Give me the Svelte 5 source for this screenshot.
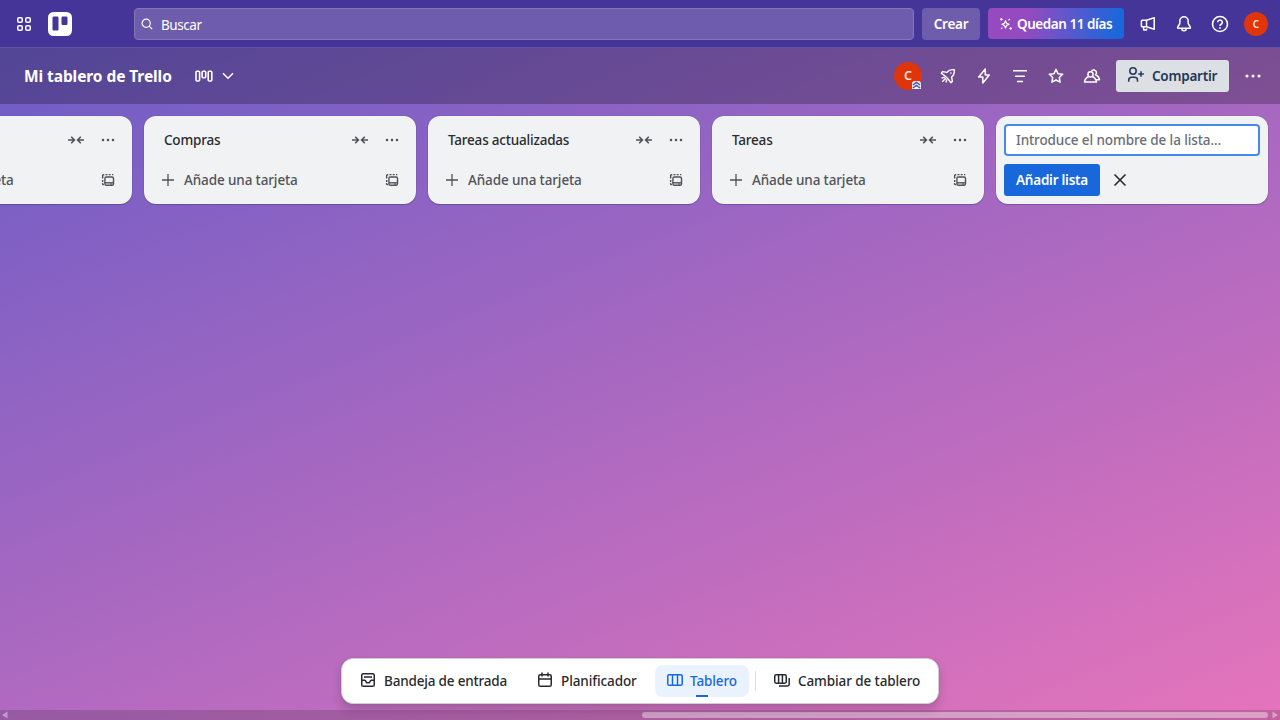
<script>
  const lists = ['', 'Compras', 'Tareas actualizadas', 'Tareas'];
</script>

{#snippet more()}
  <svg width="16" height="16" viewBox="0 0 16 16" fill="currentColor"><circle cx="3" cy="8" r="1.250"/><circle cx="8" cy="8" r="1.250"/><circle cx="13" cy="8" r="1.250"/></svg>
{/snippet}

<div class="app">
  <header class="top">
    <button class="ic apps" aria-label="Aplicaciones"><svg width="16" height="16" viewBox="0 0 16 16" fill="none" stroke="currentColor" stroke-width="1.5"><rect x="1.75" y="1.75" width="4.5" height="4.5" rx="1.3"/><rect x="9.75" y="1.75" width="4.5" height="4.5" rx="1.3"/><rect x="1.75" y="9.75" width="4.5" height="4.5" rx="1.3"/><rect x="9.75" y="9.75" width="4.5" height="4.5" rx="1.3"/></svg></button>
    <svg class="logo" width="24" height="24" viewBox="0 0 24 24"><rect width="24" height="24" rx="5.5" fill="#fff"/><rect x="4.5" y="4.5" width="6" height="14" rx="1.2" fill="#453599"/><rect x="13.5" y="4.5" width="6" height="8.5" rx="1.2" fill="#453599"/></svg>
    <div class="search">
      <svg width="12" height="12" viewBox="0 0 12 12" fill="none" stroke="currentColor" stroke-width="1.2"><circle cx="5.2" cy="5.2" r="4.1"/><path d="m8.2 8.2 3 3"/></svg>
      <span class="buscar">Buscar</span>
    </div>
    <button class="crear"><span>Crear</span></button>
    <button class="trial">
      <svg width="14" height="14" viewBox="0 0 14 14" fill="none" stroke="currentColor" stroke-width="1.2" stroke-linejoin="round"><path d="M6.500 3.700 7.600 6.200l2.500 1.100-2.500 1.100-1.100 2.500-1.100-2.500-2.500-1.100 2.500-1.100Z"/><path d="M2.300 1v2.600M1 2.300h2.600M11.700 10.200v2.600M10.400 11.500H13M9.500 3.400l1.400-1.400M2.200 11.800l1.100-1.100"/></svg>
      <span>Quedan 11 días</span>
    </button>
    <div class="topicons">
      <svg width="16" height="16" viewBox="0 0 16 16" fill="none" stroke="currentColor" stroke-width="1.5" stroke-linejoin="round"><path d="m6.500 4.300 7.700-2.500v11.400L6.500 10.700H2.200a.8.800 0 0 1-.8-.8V5.100a.8.800 0 0 1 .8-.8Zm0 0v6.400M3.600 10.700v2.600a.8.800 0 0 0 .8.800h1.400a.8.800 0 0 0 .8-.8v-.9"/></svg>
      <svg width="16" height="16" viewBox="0 0 16 16" fill="none" stroke="currentColor" stroke-width="1.5" stroke-linejoin="round"><path d="M8 .8a4.200 4.200 0 0 0-4.200 4.200v2.600L1.700 11v1.300h12.600V11l-2.100-3.400V5A4.200 4.200 0 0 0 8 .8ZM5.700 12.500a2.300 2.300 0 0 0 4.600 0"/></svg>
      <svg width="18" height="18" viewBox="0 0 18 18" fill="none" stroke="currentColor" stroke-width="1.6"><circle cx="9" cy="9" r="7.500"/><path d="M6.700 7.300a2.300 2.300 0 1 1 3.500 2C9.400 9.800 9 10.100 9 11"/><circle cx="9" cy="12.900" r=".9" fill="currentColor" stroke="none"/></svg>
      <span class="avatar small">C</span>
    </div>
  </header>

  <div class="boardbar">
    <h1>Mi tablero de Trello</h1>
    <svg class="view" width="18" height="14" viewBox="0 0 18 14" fill="none" stroke="currentColor" stroke-width="1.600"><rect x="1" y="1.200" width="3.600" height="9.800" rx="1"/><rect x="7.100" y="1.200" width="3.600" height="6.500" rx="1"/><rect x="13.200" y="1.200" width="3.600" height="9.800" rx="1"/></svg>
    <svg class="chev" width="12" height="8" viewBox="0 0 12 8" fill="none" stroke="currentColor" stroke-width="1.500"><path d="m1 1.300 5 5 5-5"/></svg>
    <div class="tools">
      <span class="avatar mid">C<i><svg width="9" height="8" viewBox="0 0 9 8" fill="none" stroke="#4551a0" stroke-width="1.300"><path d="m.8 4 3.700-2.600L8.200 4M.8 7l3.700-2.600L8.200 7"/></svg></i></span>
      <svg width="16" height="16" viewBox="0 0 16 16" fill="none" stroke="currentColor" stroke-width="1.400" stroke-linejoin="round"><path d="M14.300 1.700c-3.200-.3-5.400.2-7.300 2.700L2.600 3.600 1.300 5.200l3.700 2.700 3.100 3.100 2.700 3.700 1.600-1.300-.8-4.400c2.500-1.900 3-4.100 2.700-7.300ZM4.800 9.300l-3.300.8M5.800 10.300l-3.500 3.500M6.800 11.300l-.8 3.200"/><circle cx="10.900" cy="5.100" r=".8" fill="currentColor" stroke="none"/></svg>
      <svg width="16" height="16" viewBox="0 0 16 16" fill="none" stroke="currentColor" stroke-width="1.500" stroke-linejoin="round"><path d="M9.300 1 2.700 9h4.100v6l6.500-8H9.300Z"/></svg>
      <svg width="16" height="16" viewBox="0 0 16 16" stroke="currentColor" stroke-width="1.500"><path d="M1 2.750h14M3 8.250h10M5 13.500h6"/></svg>
      <svg width="16" height="16" viewBox="0 0 16 16" fill="none" stroke="currentColor" stroke-width="1.500" stroke-linejoin="round"><path d="m8 1.400 2 4.300 4.700.6-3.400 3.200.8 4.700L8 12l-4.100 2.200.8-4.700-3.400-3.200 4.700-.6Z"/></svg>
      <svg class="people" width="18" height="16" viewBox="0 0 18 16" fill="none" stroke="currentColor" stroke-width="1.500" stroke-linejoin="round"><circle cx="7.500" cy="6.300" r="2.600"/><path d="M5.800 8.500C3.300 9.500 1.800 11.500 1.500 14h12c-.3-2.500-1.800-4.500-4.300-5.500M8.500 2.900a2.800 2.800 0 1 1 4 3.900c2.200.9 3.700 2.600 4 4.900h-3.200"/></svg>
      <button class="share"><svg width="18" height="18" viewBox="0 0 18 18" fill="none" stroke="currentColor" stroke-width="1.500"><circle cx="6" cy="5" r="3.200"/><path d="M1.700 15.700v-1.500a3 3 0 0 1 3-3h2.800a3 3 0 0 1 3 3v1.500M14 5.200v5.600M11.200 8h5.600"/></svg><span>Compartir</span></button>
      <svg class="bm" width="18" height="16" viewBox="0 0 18 16" fill="currentColor"><circle cx="3" cy="8" r="1.550"/><circle cx="9" cy="8" r="1.550"/><circle cx="15" cy="8" r="1.550"/></svg>
    </div>
  </div>

  <main>
    {#each lists as name}
      <section class="list">
        <div class="lh">
          <h2>{name}</h2>
          <div class="acts">
            <svg width="18" height="16" viewBox="0 0 18 16" fill="none" stroke="currentColor" stroke-width="1.600"><path d="M1 8h6M4.200 4.800 7.400 8l-3.200 3.200M17 8h-6M13.800 4.800 10.600 8l3.200 3.200"/></svg>
            {@render more()}
          </div>
        </div>
        <div class="add">
          <svg width="16" height="16" viewBox="0 0 16 16" stroke="currentColor" stroke-width="1.300"><path d="M8 2v12M2 8h12"/></svg>
          <span>Añade una tarjeta</span>
          <svg class="tpl" width="16" height="16" viewBox="0 0 16 16" fill="none" stroke="currentColor" stroke-width="1.400"><path d="M4 12.600h-.6a.8.800 0 0 1-.8-.8V11M2.650 10V8M2.650 6.500V3.500a.8.800 0 0 1 .8-.8h.8M5.500 2.650h2M8.700 2.650h2M12 2.650h1.300"/><rect x="4.900" y="5" width="8.600" height="8.200" rx="1.500"/><path d="M4.900 10.800h8.600"/><path d="M10 12h2" stroke-width="1"/></svg>
        </div>
      </section>
    {/each}
    <section class="list form">
      <input aria-label="Nombre de la lista" placeholder="Introduce el nombre de la lista..." />
      <div class="row">
        <button class="primary"><span>Añadir lista</span></button>
        <svg width="16" height="16" viewBox="0 0 16 16" stroke="#292a2e" stroke-width="1.600"><path d="m2.500 2.500 11 11M13.500 2.500l-11 11"/></svg>
      </div>
    </section>
  </main>

  <nav>
    <div class="tab t1"><svg width="16" height="16" viewBox="0 0 16 16" fill="none" stroke="currentColor" stroke-width="1.500" stroke-linejoin="round"><rect x="1.750" y="1.750" width="12.500" height="12.500" rx="1.600"/><path d="M4 5h8M2 8.300h2.600c.3 0 .6.200.8.500l1.400 1.900h2.400l1.400-1.900c.2-.3.500-.5.800-.5H14"/></svg><span>Bandeja de entrada</span></div>
    <div class="tab t2"><svg width="16" height="16" viewBox="0 0 16 16" fill="none" stroke="currentColor" stroke-width="1.500"><rect x="1.750" y="2.750" width="12.500" height="11.500" rx="1.600"/><path d="M2 7h12M5 .5v4M11 .5v4"/></svg><span>Planificador</span></div>
    <div class="tab t3 on"><svg width="16" height="16" viewBox="0 0 16 16" fill="none" stroke="currentColor" stroke-width="1.500"><rect x=".75" y="2.750" width="14.500" height="10.500" rx="1.600"/><path d="M5.500 3v10M10.500 3v10"/></svg><span>Tablero</span></div>
    <div class="sep"></div>
    <div class="tab t4"><svg width="18" height="16" viewBox="0 0 18 16" fill="none" stroke="currentColor" stroke-width="1.500"><rect x="1.750" y="2.750" width="11.500" height="8.500" rx="1.400"/><path d="M5.600 3v8M9.400 3v8M6 14h8.500a1.700 1.700 0 0 0 1.700-1.700V6"/></svg><span>Cambiar de tablero</span></div>
  </nav>

  <div class="scroll">
    <svg width="10" height="10" viewBox="0 0 10 10" fill="currentColor"><path d="M7.500 1.500v7L2 5Z"/></svg>
    <div class="thumb"></div>
    <svg width="12" height="10" viewBox="0 0 12 10" fill="currentColor"><path d="M4.500 1.500v7L10 5Z"/></svg>
  </div>
</div>

<style>
  * { box-sizing: border-box; }
  .app { position: relative; display: flex; flex-direction: column; width: 1280px; height: 720px; overflow: hidden; font: 550 13.5px/20px "Noto Sans", "Open Sans", sans-serif; color: #fff; background: linear-gradient(158deg, #6e5dc6 5%, #e774bb 101%); }
  svg { flex: none; display: block; }
  button { font: inherit; color: inherit; border: 0; background: none; padding: 0; display: flex; align-items: center; }
  span, h1, h2 { white-space: nowrap; }
  .top { height: 48px; flex: none; display: flex; align-items: center; background: #453599; border-bottom: 1px solid #6254a4; padding: 0 12px 0 16px; }
  .logo { margin-left: 16px; }
  .search { margin-left: 62px; width: 780px; height: 32px; border: 1px solid #8475b6; border-radius: 4px; background: #6e5dac; display: flex; align-items: center; padding-left: 6px; gap: 8px; font-weight: 400; }
  .buscar { letter-spacing: -.45px; padding-top: 2px; }
  .crear { margin-left: 8px; width: 58px; height: 32px; justify-content: center; border-radius: 4px; background: #6e5dac; font-weight: 600; letter-spacing: -.25px; }
  .trial { margin-left: 8px; width: 136px; height: 31px; border-radius: 4px; background: linear-gradient(100deg, #964ac0 28%, #1868db 95%); padding-left: 11px; gap: 4px; font-weight: 600; letter-spacing: -.45px; }
  .topicons { margin-left: auto; display: flex; align-items: center; gap: 20px; }
  .topicons svg:nth-child(2) { margin-right: -1px; }
  .topicons svg:nth-child(3) { margin-right: -5px; }
  .avatar { background: #de350b; border-radius: 50%; display: flex; align-items: center; justify-content: center; color: #ffe4dc; font-weight: 600; position: relative; }
  .small { width: 24px; height: 24px; font-size: 10px; }
  .mid { width: 28px; height: 28px; font-size: 12.5px; }
  .mid i { position: absolute; right: 1px; bottom: 1px; width: 9px; height: 8px; background: #eef1fa; border-radius: 3px 3px 0 0; }
  .boardbar { height: 56px; flex: none; display: flex; align-items: center; padding: 0 18px 0 24px; background: #0000003d; }
  h1 { margin: 0; font-size: 15.5px; line-height: 24px; font-weight: 750; width: 171px; letter-spacing: -.08px; }
  .chev { margin-left: 9px; }
  .view { margin-top: 2px; }
  .tools { margin-left: auto; display: flex; align-items: center; gap: 20px; }
  .tools .mid { margin-right: -2px; }
  .people { margin-left: -1px; }
  .share { height: 32px; width: 113px; border-radius: 3px; background: #dcdfe4; color: #243757; padding-left: 11px; gap: 7px; font-weight: 600; margin-left: -5px; margin-right: -5px; letter-spacing: -.24px; }
  .share svg { margin-top: -2px; }
  main { flex: 1; display: flex; align-items: flex-start; gap: 12px; margin-left: -140px; padding-top: 12px; }
  .list { width: 272px; height: 88px; flex: none; background: #f1f2f4; border-radius: 12px; padding: 8px; color: #505258; box-shadow: 0 1px 1px #091e4240, 0 0 1px #091e424f; }
  .lh { display: flex; align-items: center; height: 32px; padding-left: 12px; }
  h2 { margin: 0; font-size: 13.5px; line-height: 20px; font-weight: 550; color: #292a2e; letter-spacing: -.2px; }
  .acts { margin-left: auto; display: flex; gap: 15px; align-items: center; padding-right: 8px; }
  .add { display: flex; align-items: center; gap: 8px; height: 32px; margin-top: 8px; padding: 0 8px; letter-spacing: -.12px; }
  .tpl { margin-left: auto; }
  input { display: block; width: 256px; height: 32px; font: inherit; letter-spacing: -.1px; border: 2px solid #4688ec; border-radius: 4px; background: #fff; padding: 0 10px 1px; outline: 0; }
  input::placeholder { color: #6b6e76; opacity: 1; }
  .row { display: flex; align-items: center; gap: 12px; margin-top: 8px; }
  .primary { width: 96px; height: 32px; border-radius: 3px; background: #1868db; color: #fff; justify-content: center; font-weight: 600; letter-spacing: -.25px; }
  nav { position: absolute; z-index: 2; left: 341px; top: 658px; width: 598px; height: 46px; background: #fff; border: 1px solid #d5cddb; border-radius: 12px; display: flex; align-items: center; padding: 0 6px; color: #292a2e; box-shadow: 0 6px 10px #1e1f2133, 0 0 1px #1e1f214f; letter-spacing: -.1px; }
  .tab { position: relative; height: 32px; display: flex; align-items: center; gap: 8px; padding-left: 12px; border-radius: 8px; flex: none; }
  .tab svg { margin-top: -2px; }
  .t1 { width: 177px; letter-spacing: -.18px; }
  .t2 { width: 130px; }
  .t3 { width: 94px; background: #e9f2fe; color: #1868db; gap: 7px; }
  .t3::after { content: ""; position: absolute; left: 41px; bottom: 0; width: 12px; height: 2px; background: #1868db; }
  .t4 { padding-left: 17px; gap: 7px; }
  .sep { width: 1px; height: 20px; margin-left: 6px; background: #dddee1; }
  .scroll { height: 10px; flex: none; display: flex; align-items: center; background: #00000026; color: #ffffff66; }
  .thumb { margin-left: auto; width: 626px; height: 6px; border-radius: 3px; background: #ffffff66; }
</style>
